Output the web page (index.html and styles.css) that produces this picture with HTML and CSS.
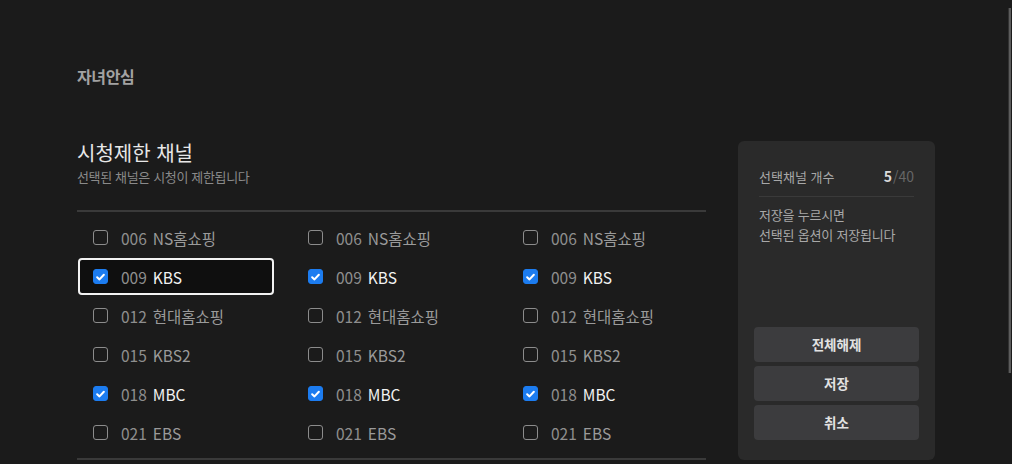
FILE: index.html
```html
<!DOCTYPE html>
<html lang="ko">
<head>
<meta charset="utf-8">
<title>자녀안심</title>
<link rel="stylesheet" href="styles.css">
</head>
<body>
<div class="page">
  <div class="crumb">자녀안심</div>
  <div class="content">
    <section class="main">
      <h1 class="title">시청제한 채널</h1>
      <p class="subtitle">선택된 채널은 시청이 제한됩니다</p>
      <div class="list">
        <div class="cell"><span class="cb"></span><span class="num">006</span><span class="name">NS홈쇼핑</span></div>
        <div class="cell"><span class="cb"></span><span class="num">006</span><span class="name">NS홈쇼핑</span></div>
        <div class="cell"><span class="cb"></span><span class="num">006</span><span class="name">NS홈쇼핑</span></div>

        <div class="cell focus on"><span class="cb"><svg viewBox="0 0 14 14"><path d="M3.4 7.3 L5.9 9.6 L10.6 4.6"/></svg></span><span class="num">009</span><span class="name">KBS</span></div>
        <div class="cell on"><span class="cb"><svg viewBox="0 0 14 14"><path d="M3.4 7.3 L5.9 9.6 L10.6 4.6"/></svg></span><span class="num">009</span><span class="name">KBS</span></div>
        <div class="cell on"><span class="cb"><svg viewBox="0 0 14 14"><path d="M3.4 7.3 L5.9 9.6 L10.6 4.6"/></svg></span><span class="num">009</span><span class="name">KBS</span></div>

        <div class="cell"><span class="cb"></span><span class="num">012</span><span class="name">현대홈쇼핑</span></div>
        <div class="cell"><span class="cb"></span><span class="num">012</span><span class="name">현대홈쇼핑</span></div>
        <div class="cell"><span class="cb"></span><span class="num">012</span><span class="name">현대홈쇼핑</span></div>

        <div class="cell"><span class="cb"></span><span class="num">015</span><span class="name">KBS2</span></div>
        <div class="cell"><span class="cb"></span><span class="num">015</span><span class="name">KBS2</span></div>
        <div class="cell"><span class="cb"></span><span class="num">015</span><span class="name">KBS2</span></div>

        <div class="cell on"><span class="cb"><svg viewBox="0 0 14 14"><path d="M3.4 7.3 L5.9 9.6 L10.6 4.6"/></svg></span><span class="num">018</span><span class="name">MBC</span></div>
        <div class="cell on"><span class="cb"><svg viewBox="0 0 14 14"><path d="M3.4 7.3 L5.9 9.6 L10.6 4.6"/></svg></span><span class="num">018</span><span class="name">MBC</span></div>
        <div class="cell on"><span class="cb"><svg viewBox="0 0 14 14"><path d="M3.4 7.3 L5.9 9.6 L10.6 4.6"/></svg></span><span class="num">018</span><span class="name">MBC</span></div>

        <div class="cell"><span class="cb"></span><span class="num">021</span><span class="name">EBS</span></div>
        <div class="cell"><span class="cb"></span><span class="num">021</span><span class="name">EBS</span></div>
        <div class="cell"><span class="cb"></span><span class="num">021</span><span class="name">EBS</span></div>
      </div>
    </section>
    <aside class="panel">
      <div class="info">
        <div class="count-row">
          <span class="count-label">선택채널 개수</span>
          <span class="count"><b>5</b><span class="total">/40</span></span>
        </div>
        <p class="hint">저장을 누르시면<br>선택된 옵션이 저장됩니다</p>
      </div>
      <div class="buttons">
        <button class="btn">전체해제</button>
        <button class="btn">저장</button>
        <button class="btn">취소</button>
      </div>
    </aside>
  </div>
  <div class="scrollbar"></div>
</div>
</body>
</html>
```

FILE: styles.css
```css
* { box-sizing: border-box; }
html, body {
  margin: 0;
  padding: 0;
  background: #1b1b1b;
}
body {
  width: 1012px;
  height: 464px;
  overflow: hidden;
  font-family: "Noto Sans CJK KR", "Noto Sans", sans-serif;
  color: #e6e6e6;
}
.page {
  position: relative;
  height: 464px;
  padding: 66px 0 0 77px;
}
.crumb {
  font-size: 16px;
  line-height: 20px;
  font-weight: 700;
  color: #a2a2a2;
  letter-spacing: -0.4px;
}
.content {
  margin-top: 55px;
  display: flex;
  gap: 32px;
  align-items: stretch;
}
.main {
  width: 629px;
}
.title {
  margin: 0;
  font-size: 20px;
  line-height: 24px;
  font-weight: 400;
  color: #e8e8e8;
  letter-spacing: 0;
}
.subtitle {
  margin: 2px 0 0;
  font-size: 13px;
  line-height: 20px;
  color: #8a8a8a;
  letter-spacing: -0.35px;
}
.list {
  margin-top: 23px;
  border-top: 2px solid #3a3a3a;
  border-bottom: 2px solid #3a3a3a;
  padding: 7px 0 7px 1px;
  display: grid;
  grid-template-columns: repeat(3, 196px);
  column-gap: 19px;
  row-gap: 2px;
}
.cell {
  height: 37px;
  display: flex;
  align-items: center;
  padding-left: 13px;
  border: 2px solid transparent;
  border-radius: 4px;
  font-size: 15.5px;
  color: #9a9a9a;
}
.cell.focus {
  border-color: #f2f2f2;
  background: #0f0f0f;
}
.cb {
  width: 15px;
  height: 15px;
  flex: none;
  border: 1.5px solid #8c8c8c;
  border-radius: 3px;
  margin-right: 13px;
  display: flex;
  align-items: center;
  justify-content: center;
}
.cb svg {
  width: 14px;
  height: 14px;
  display: block;
}
.cb svg path {
  fill: none;
  stroke: #ffffff;
  stroke-width: 2.2;
  stroke-linecap: round;
  stroke-linejoin: round;
}
.cell.on .cb {
  background: #1c7cf0;
  border-color: #1c7cf0;
}
.num {
  color: #8e8e8e;
  margin-right: 6px;
}
.cell.on .name {
  color: #f2f2f2;
}
.panel {
  width: 197px;
  background: #2a2a2a;
  border-radius: 6px;
  padding: 24px 16px 20px;
  display: flex;
  flex-direction: column;
  justify-content: space-between;
}
.info {
  padding: 0 5px;
}
.count-row {
  display: flex;
  justify-content: space-between;
  align-items: center;
  height: 22px;
  padding-bottom: 9px;
  box-sizing: content-box;
  border-bottom: 1px solid #3a3a3a;
  font-size: 13px;
  color: #a8a8a8;
}
.count {
  font-size: 14px;
}
.count b {
  color: #dadada;
  font-weight: 700;
}
.total {
  color: #666666;
  margin-left: 1px;
}
.hint {
  margin: 8px 0 0;
  font-size: 13px;
  line-height: 20px;
  color: #a8a8a8;
  letter-spacing: -0.2px;
}
.buttons {
  display: flex;
  flex-direction: column;
  gap: 4px;
}
.btn {
  height: 35px;
  border: none;
  border-radius: 4px;
  background: #3c3c3e;
  color: #e2e2e2;
  font-family: inherit;
  font-size: 13.5px;
  font-weight: 700;
  padding: 0 0 2px;
}
.scrollbar {
  position: absolute;
  top: 8px;
  left: 1008px;
  width: 3px;
  height: 365px;
  background: #5c5c5c;
  border-left: 1px solid #333;
}
```
